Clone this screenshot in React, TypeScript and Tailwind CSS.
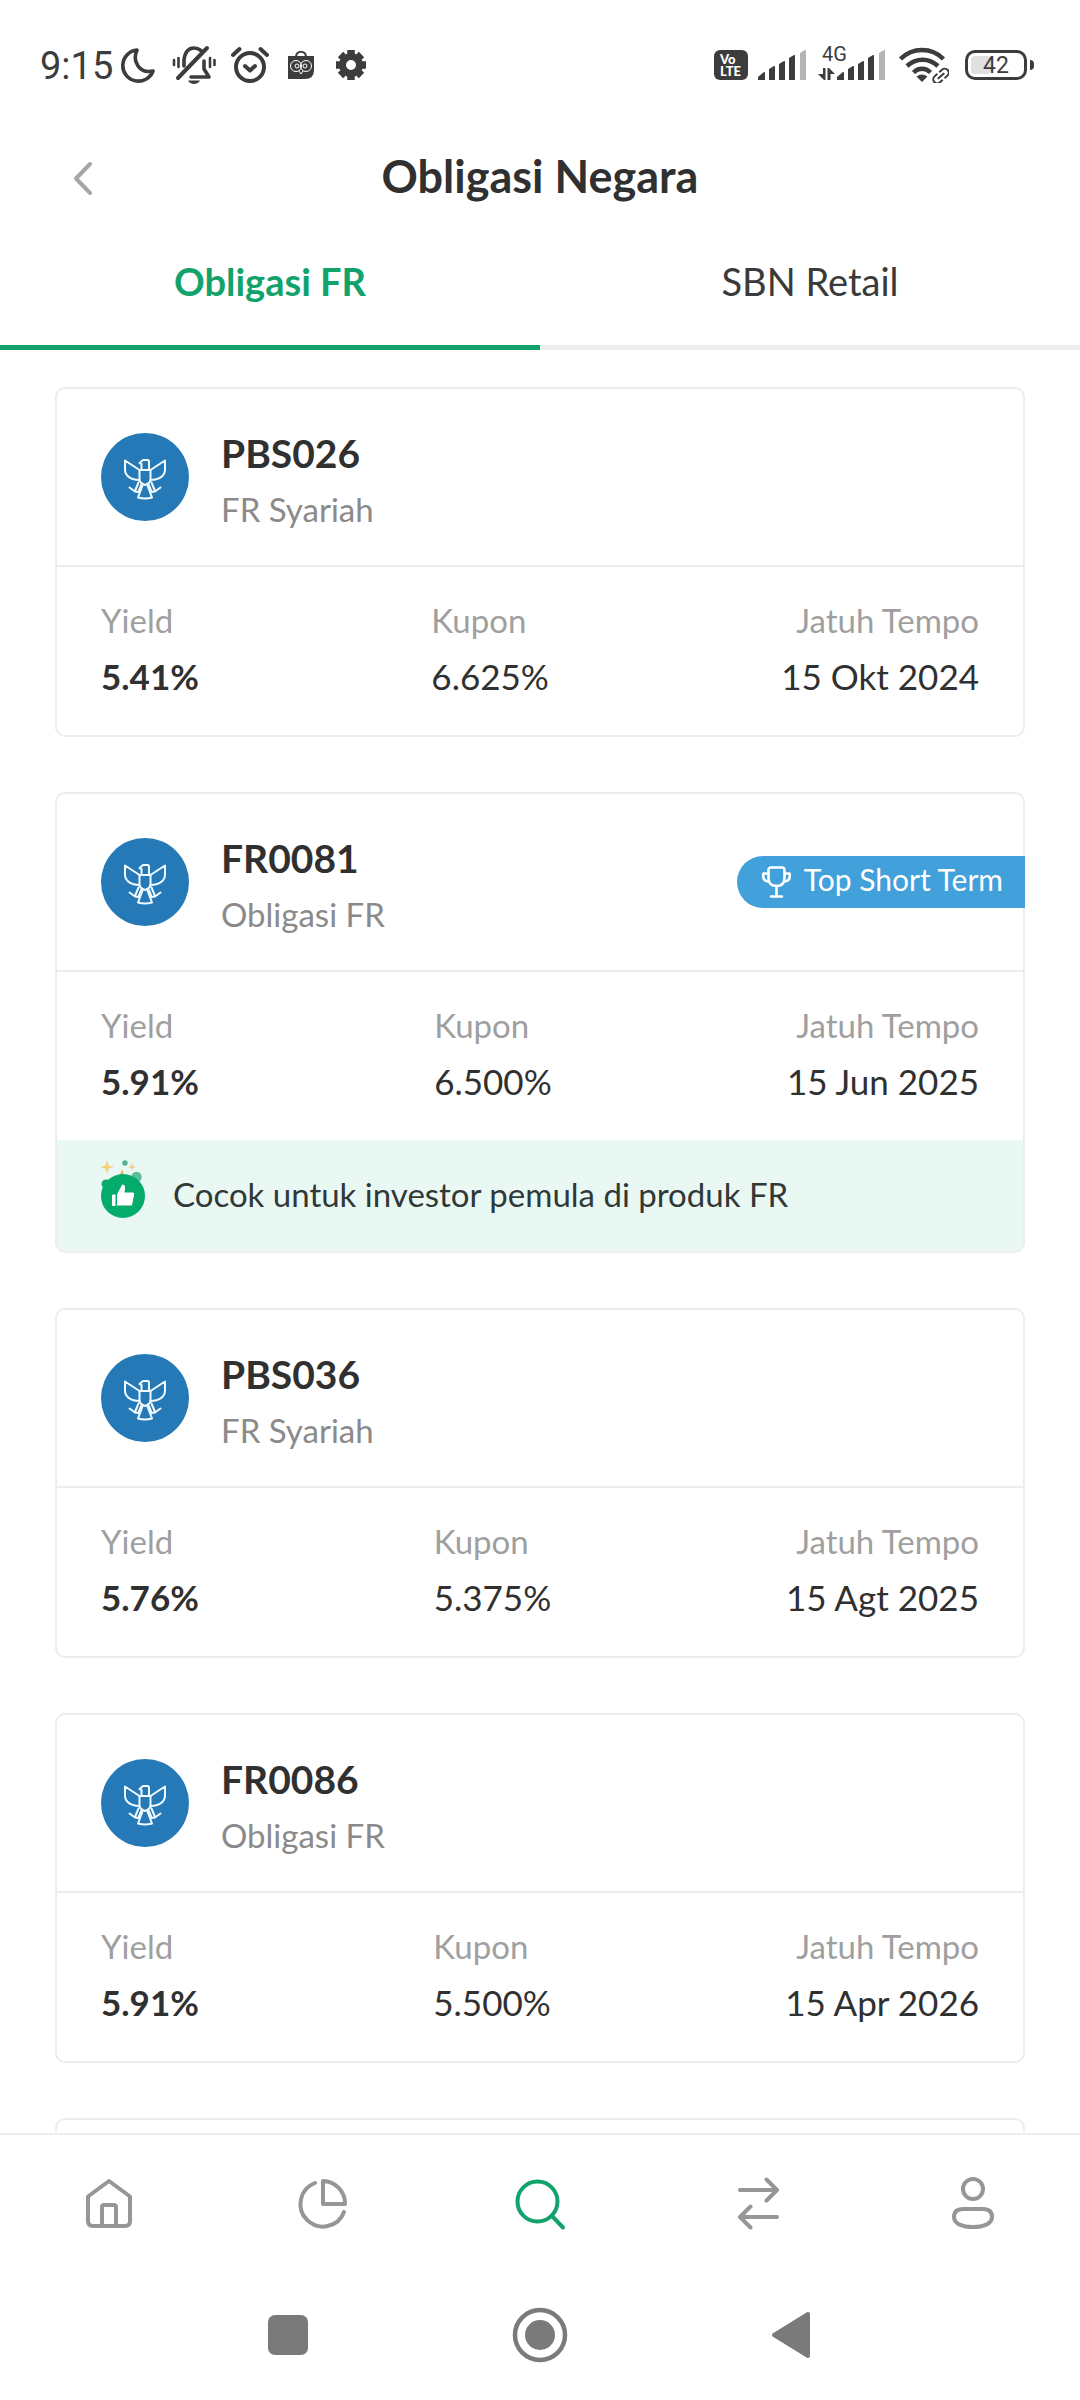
import { useState } from 'react';

interface Bond {
  code: string;
  type: string;
  yieldRate: string;
  coupon: string;
  maturity: string;
  badge?: string;
  note?: string;
}

const bonds: Bond[] = [
  { code: 'PBS026', type: 'FR Syariah', yieldRate: '5.41%', coupon: '6.625%', maturity: '15 Okt 2024' },
  {
    code: 'FR0081',
    type: 'Obligasi FR',
    yieldRate: '5.91%',
    coupon: '6.500%',
    maturity: '15 Jun 2025',
    badge: 'Top Short Term',
    note: 'Cocok untuk investor pemula di produk FR'
  },
  { code: 'PBS036', type: 'FR Syariah', yieldRate: '5.76%', coupon: '5.375%', maturity: '15 Agt 2025' },
  { code: 'FR0086', type: 'Obligasi FR', yieldRate: '5.91%', coupon: '5.500%', maturity: '15 Apr 2026' }
];

const tabs = ['Obligasi FR', 'SBN Retail'];

function SignalBars() {
  return (
    <svg width="48" height="30" viewBox="0 0 48 30" fill="#3c3c3c">
      <path d="M0 30v-3l6-5q1-.5 1 1v7z" />
      <path d="M11 30V19l5-3q1-.5 1 1v13z" />
      <path d="M21 30V14l5-3q1-.5 1 1v18z" />
      <path d="M31 30V8l5-3q1-.5 1 1v24z" />
      <path d="M42 30V3l5-3q1-.5 1 1v29z" fill="#b4b4b4" />
    </svg>
  );
}

function StatusBar() {
  return (
    <div className="flex h-32 shrink-0 items-center justify-between pt-0.5 pr-[46px] pl-10 font-['Roboto',sans-serif] text-[#3c3c3c]">
      <div className="flex items-center">
        <span className="w-20 pt-0.5 text-[38px] leading-10">9:15</span>
        {/* Do not disturb */}
        <svg className="mr-4" width="36" height="36" viewBox="0 0 36 36" fill="none" stroke="#3c3c3c" strokeWidth="3.6" strokeLinejoin="round">
          <path d="M17 3C12 14 19 27 33 24A15.6 15.6 0 1 1 17 3Z" />
        </svg>
        {/* Silent */}
        <svg className="mr-3.5" width="44" height="40" viewBox="0 0 44 40" fill="none" stroke="#3c3c3c" strokeWidth="3.6" strokeLinecap="round">
          <path d="M12 21v-6C13 7 17 3 22 3c3 0 5 1 7 2.500M32 16v8l5 8H19" strokeLinejoin="round" />
          <path d="M35 3 6 33" strokeWidth="4" />
          <path d="M2 15v5M6.500 13v9M38 13v9M42.500 15v5" strokeWidth="2.600" />
          <path d="M16 35.500h12c-2 4.500-10 4.500-12 0z" fill="#3c3c3c" stroke="none" />
        </svg>
        {/* Alarm */}
        <svg className="mr-[18px]" width="40" height="38" viewBox="0 0 40 38" fill="none" stroke="#3c3c3c" strokeWidth="4" strokeLinecap="round" strokeLinejoin="round">
          <circle cx="20" cy="21" r="14" />
          <path d="m15 20 5 4.500 5-4.500M3 9l6.500-6M37 9l-6.500-6" />
        </svg>
        {/* Shopping app */}
        <svg className="mr-[22px]" width="26" height="30" viewBox="0 0 26 30" fill="none">
          <path d="M8 7c0-7 10-7 10 0" stroke="#3c3c3c" strokeWidth="2.200" />
          <path d="M0 6h26v14q0 9-9 9H0z" fill="#3c3c3c" />
          <g stroke="#fff" strokeWidth="1">
            <circle cx="8" cy="16" r="5.500" />
            <circle cx="18" cy="16" r="5.500" />
            <path d="m11 21 2 3 2-3" />
          </g>
          <circle cx="9" cy="16" r="2" stroke="#fff" />
          <circle cx="17" cy="16" r="2" stroke="#fff" />
        </svg>
        {/* Settings */}
        <svg width="30" height="32" viewBox="-15 -16 30 32" fill="none" stroke="#3c3c3c">
          <circle r="8.500" strokeWidth="7" />
          <path d="M0-11v-4M0 11v4M-11 0h-4M11 0h4M8-8l2.500-2.500M-8-8l-2.500-2.500M8 8l2.500 2.500M-8 8l-2.500 2.500" strokeWidth="7.500" />
        </svg>
      </div>

      <div className="flex items-center">
        <div className="mr-2.5 flex h-[30px] w-[34px] flex-col items-start justify-center rounded-md bg-[#3c3c3c] pl-1.5 font-['Lato',sans-serif] text-[13px] leading-3 font-black text-white">
          <span>Vo</span>
          <span>LTE</span>
        </div>
        <SignalBars />
        <div className="relative mr-3.5 ml-3 flex items-end gap-0.5">
          <span className="absolute -top-1.5 left-1 text-[20px] leading-5">4G</span>
          <svg width="17" height="12" viewBox="0 0 17 12" fill="#3c3c3c">
            <path d="M5 0h2.500v12H6L0 6h5zM9.500 0H11l6 6h-4.500v6h-3z" />
          </svg>
          <SignalBars />
        </div>
        <svg className="mr-4" width="50" height="36" viewBox="0 0 50 36" fill="none" stroke="#3c3c3c" strokeWidth="4.500">
          <path d="M1.500 12c12-12 31-12 43 0M8 19c9-8.500 22-8.500 31 0M14.500 25.500c5-5 12-5 17 0" />
          <path d="M17.500 29.500q5.500-4 11 0L23 35z" fill="#3c3c3c" stroke="none" />
          <g transform="rotate(-42 42 29)" strokeWidth="2">
            <path d="M40 25h-3a4 4 0 0 0 0 8h3M44 25h3a4 4 0 0 1 0 8h-3M38.500 29h7" strokeLinecap="round" />
          </g>
        </svg>
        <div className="relative flex h-[30px] w-[62px] items-center justify-center rounded-[10px] border-[3px] border-[#3c3c3c]">
          <div className="absolute top-[3px] left-[3px] h-[18px] w-5 rounded bg-[#e0e0e0]" />
          <span className="relative pt-0.5 text-[23px] leading-6">42</span>
        </div>
        <div className="ml-[3px] h-2.5 w-1 rounded-r bg-[#3c3c3c]" />
      </div>
    </div>
  );
}

function GarudaIcon() {
  return (
    <svg className="shrink-0" width="88" height="88" viewBox="0 0 88 88" fill="none" stroke="#f2fbff" strokeWidth="2" strokeLinejoin="round" strokeLinecap="round">
      <circle cx="44" cy="44" r="44" fill="#2479b6" stroke="none" />
      <path d="M38.500 37 24 27.500v9c0 6.500 6 10.500 14.500 10.500M49.500 37 64 27.500v9c0 6.500-6 10.500-14.500 10.500" />
      <path d="M40.500 36.500V31l-2-1 3.500-3h4.500q1.500 0 1.500 1.500v8" />
      <path d="M38.500 37h11v9.500q0 3.500-5.500 5.500-5.500-2-5.500-5.500z" />
      <path d="M41.500 52.500 37 64.500q7 2 14 0l-4.500-12" />
      <path d="M37.500 49.500 34 58M40 52l-2.500 6.500M28.500 54.500l5.500 4 3.500.5M50.500 49.500 54 58M48 52l2.500 6.500M59.500 54.500l-5.500 4-3.500.5" />
    </svg>
  );
}

function ThumbIcon() {
  return (
    <svg className="shrink-0 overflow-visible" width="44" height="44" viewBox="0 0 44 44">
      <path d="M6-14 7.500-8.500 13-7 7.500-5.500 6 0 4.500-5.500-1-7l5.500-1.500z" fill="#f3cf75" />
      <path d="m31-11 1 3 3 1-3 1-1 3-1-3-3-1 3-1z" fill="#f3c98a" />
      <path d="m21-5 2 6h-4z" fill="#e8b84e" />
      <circle cx="24" cy="-11" r="2.700" fill="#55b191" />
      <circle cx="35.500" cy="3" r="5.200" fill="#5cbc97" />
      <circle cx="5" cy="10" r="4.500" fill="#12a56c" />
      <circle cx="22" cy="22" r="22" fill="#04ab6b" />
      <path d="M11 21.500q0-1 1-1h2.500V32H12q-1 0-1-1zM16 20.500l5-9.500q.5-1 2 0 1.500 1 1 3l-.5 4.500H32q1.500 0 1.200 1.500l-2 10.500q-.2 1-1.200 1H16z" fill="#fff" />
    </svg>
  );
}

function TrophyIcon() {
  return (
    <svg width="31" height="32" viewBox="0 0 31 32" fill="none" stroke="#fff" strokeWidth="2.600" strokeLinecap="round" strokeLinejoin="round">
      <path d="M7.500 4q0-2.500 2.500-2.500h11q2.500 0 2.500 2.500v8q0 8-8 8t-8-8zM15.500 20v10M10 30.500h11" />
      <path d="M7 7.500H2.500Q1 15 7.500 15.500M24 7.500h4.500Q30 15 23.500 15.500" />
    </svg>
  );
}

function BondCard({ bond }: { bond: Bond }) {
  return (
    <article className="rounded-[10px] border-2 border-[#ededed]">
      <div className="flex items-center border-b-2 border-[#ededed] py-11 pl-11">
        <GarudaIcon />
        <div className="ml-8 h-[88px] flex-1">
          <h2 className="text-[39px] leading-10 font-bold text-[#303030]">{bond.code}</h2>
          <p className="mt-4 text-[33px] leading-10 text-[#8a8a8a]">{bond.type}</p>
        </div>
        {bond.badge && (
          <span className="-mr-0.5 flex h-[52px] items-center gap-3 rounded-l-full bg-[#42a0da] pr-[22px] pl-6 text-[30px] leading-8 text-white">
            <TrophyIcon />
            <span className="pb-1.5">{bond.badge}</span>
          </span>
        )}
      </div>

      <dl className="flex h-[168px] justify-between px-11 pt-[33px]">
        <div>
          <dt className="text-[33px] leading-10 text-[#9f9f9f]">Yield</dt>
          <dd className="mt-4 text-[35px] leading-10 font-bold text-[#303030]">{bond.yieldRate}</dd>
        </div>
        <div>
          <dt className="text-[33px] leading-10 text-[#9f9f9f]">Kupon</dt>
          <dd className="mt-4 text-[35px] leading-10 text-[#303030]">{bond.coupon}</dd>
        </div>
        <div className="text-right">
          <dt className="text-[33px] leading-10 text-[#9f9f9f]">Jatuh Tempo</dt>
          <dd className="mt-4 text-[35px] leading-10 text-[#303030]">{bond.maturity}</dd>
        </div>
      </dl>

      {bond.note && (
        <div className="flex h-[111px] items-center gap-7 rounded-b-lg bg-[#eaf8f3] px-11">
          <ThumbIcon />
          <p className="pb-1 text-[33px] leading-10 text-[#303838]">{bond.note}</p>
        </div>
      )}
    </article>
  );
}

const navItems = [
  {
    label: 'Beranda',
    icon: (
      <>
        <path d="M29 6 50 21.500V46q0 5-5 5H13q-5 0-5-5V21.500z" />
        <path d="M22 51V32q0-2 2-2h10q2 0 2 2v19" />
      </>
    )
  },
  {
    label: 'Portofolio',
    icon: (
      <>
        <path d="M27 6a22.500 22.500 0 0 1 22 23H27z" />
        <path d="M19 8A22.500 22.500 0 1 0 48 37" />
      </>
    )
  },
  {
    label: 'Cari',
    icon: (
      <>
        <circle cx="25.500" cy="26.500" r="20" />
        <path d="m40 41 11 11.500" />
      </>
    )
  },
  {
    label: 'Transaksi',
    icon: <path d="M12 15h37M38.500 4.500 49 15 38.500 25.500M49 42H12M22.500 31.500 12 42l10.500 10.500" />
  },
  {
    label: 'Akun',
    icon: (
      <>
        <circle cx="29" cy="14" r="10" />
        <path d="M19 34h20q9 0 9 8c0 7-9 10-19 10s-19-3-19-10q0-8 9-8z" />
      </>
    )
  }
];

function BottomNav() {
  const [active, setActive] = useState('Cari');

  return (
    <nav className="grid h-[137px] shrink-0 grid-cols-5 border-t-2 border-[#ededed] bg-white">
      {navItems.map(item => (
        <button
          key={item.label}
          aria-label={item.label}
          onClick={() => setActive(item.label)}
          className={`flex items-center justify-center ${active === item.label ? 'text-[#12a36d]' : 'text-[#969696]'}`}
        >
          <svg width="56" height="56" viewBox="0 0 56 56" fill="none" stroke="currentColor" strokeWidth="4" strokeLinecap="round" strokeLinejoin="round">
            {item.icon}
          </svg>
        </button>
      ))}
    </nav>
  );
}

function SystemNav() {
  return (
    <div className="flex h-[130px] shrink-0 items-center justify-center gap-[196px] text-[#7a7a7a]">
      <button aria-label="Recent apps">
        <svg width="56" height="56" viewBox="0 0 56 56" fill="currentColor">
          <rect x="8" y="8" width="40" height="40" rx="7" />
        </svg>
      </button>
      <button aria-label="Home">
        <svg width="56" height="56" viewBox="0 0 56 56" fill="currentColor">
          <circle cx="28" cy="28" r="25" fill="none" stroke="currentColor" strokeWidth="4.500" />
          <circle cx="28" cy="28" r="15" />
        </svg>
      </button>
      <button aria-label="Back">
        <svg width="56" height="56" viewBox="0 0 56 56" fill="currentColor" stroke="currentColor" strokeWidth="4" strokeLinejoin="round">
          <path d="M10 28 44 7v42z" />
        </svg>
      </button>
    </div>
  );
}

export default function App() {
  const [activeTab, setActiveTab] = useState(tabs[0]);

  return (
    <div className="flex h-screen flex-col overflow-hidden bg-white font-['Lato',sans-serif]">
      <StatusBar />

      <header className="grid h-[100px] shrink-0 grid-cols-[100px_1fr_100px] items-center px-[55px]">
        <button aria-label="Kembali" className="pl-4">
          <svg width="24" height="36" viewBox="0 0 24 36" fill="none" stroke="#a6a6a6" strokeWidth="4" strokeLinecap="round" strokeLinejoin="round">
            <path d="M19 4 5 18.500 19 33" />
          </svg>
        </button>
        <h1 className="pb-1 text-center text-[45px] leading-[48px] font-bold text-[#303030]">Obligasi Negara</h1>
      </header>

      <div role="tablist" className="grid h-[122px] shrink-0 grid-cols-2">
        {tabs.map(tab => (
          <button
            key={tab}
            role="tab"
            aria-selected={activeTab === tab}
            onClick={() => setActiveTab(tab)}
            className={`border-b-[5px] pb-3 text-[38px] leading-10 ${
              activeTab === tab ? 'border-[#12a36d] font-bold text-[#12a36d]' : 'border-[#ededed] text-[#3a3a3a]'
            }`}
          >
            {tab}
          </button>
        ))}
      </div>

      <main className="flex min-h-0 flex-1 flex-col gap-[55px] overflow-y-auto px-[55px] pt-[37px] [scrollbar-width:none]">
        {bonds.map(bond => (
          <BondCard key={bond.code} bond={bond} />
        ))}
        {/* Next card, still loading */}
        <div className="h-[350px] shrink-0 rounded-[10px] border-2 border-[#ededed]" />
      </main>

      <BottomNav />
      <SystemNav />
    </div>
  );
}
